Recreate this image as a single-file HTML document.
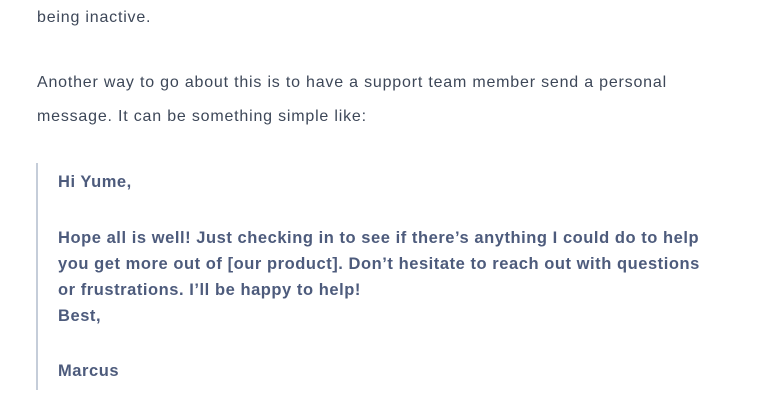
<!DOCTYPE html>
<html><head><style>
body{margin:0;width:774px;height:418px;background:#fff;font-family:"Liberation Sans",sans-serif;overflow:hidden;position:relative}
.t{position:absolute;left:37px;color:#3d4758;font-size:16px;letter-spacing:0.8px;line-height:34px;margin:0;white-space:nowrap}
.bq{position:absolute;left:36px;top:163px;width:2px;height:227px;background:#c5cdd9}
.b{position:absolute;left:58px;color:#4d5b7c;font-weight:bold;font-size:16.5px;letter-spacing:0.55px;line-height:26px;margin:0;white-space:nowrap}
</style></head><body>
<p class="t" style="top:1px">being inactive.</p>
<p class="t" style="top:66px">Another way to go about this is to have a support team member send a personal<br>message. It can be something simple like:</p>
<div class="bq"></div>
<p class="b" style="top:169px">Hi Yume,</p>
<p class="b" style="top:225px">Hope all is well! Just checking in to see if there’s anything I could do to help<br>you get more out of [our product]. Don’t hesitate to reach out with questions<br>or frustrations. I’ll be happy to help!<br>Best,</p>
<p class="b" style="top:358px">Marcus</p>
</body></html>
